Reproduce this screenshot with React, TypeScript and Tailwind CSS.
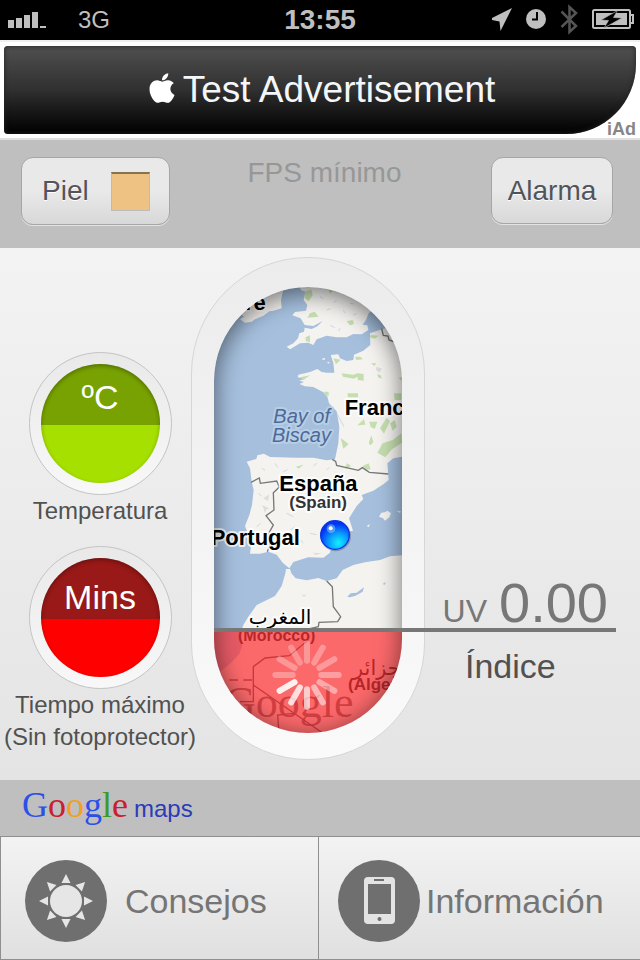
import { FaApple } from "react-icons/fa";

const SANS = "font-['Liberation_Sans','Noto_Sans',sans-serif]";

function StatusBar() {
  return (
    <header className="relative flex h-10 items-center justify-between bg-black pl-2 pr-1 text-[#bfbfbf]">
      <div className="flex items-center gap-8">
        <svg className="h-4 w-[38px]" viewBox="0 0 38 16" fill="currentColor" aria-hidden="true">
          <rect x="0" y="8" width="6" height="8" />
          <rect x="8" y="6" width="6" height="10" />
          <rect x="16" y="3" width="6" height="13" />
          <rect x="24" y="0" width="6" height="16" />
          <rect x="32" y="14" width="6" height="2" />
        </svg>
        <span className="text-2xl leading-10">3G</span>
      </div>
      <time className="absolute inset-x-0 text-center text-[28px] leading-10 font-bold">13:55</time>
      <svg className="h-10 w-36" viewBox="0 0 144 40" fill="currentColor" aria-hidden="true">
        <path d="M20 8 L8.500 31 L7.500 21.500 L-3 19.500 Z" />
        <circle cx="44" cy="19" r="10" />
        <path d="M45 12 V19.500 H40" fill="none" stroke="#000" strokeWidth="2" />
        <path d="M69.500 11.500 L84 26 L77.500 32 V7 L84 13 L69.500 27" fill="none" stroke="#555" strokeWidth="2.500" />
        <rect x="101" y="10" width="37" height="18" rx="1.500" fill="none" stroke="currentColor" strokeWidth="2" />
        <path d="M138 15 h3 v8 h-3" fill="none" stroke="currentColor" strokeWidth="2" />
        <rect x="104" y="13" width="31" height="12" />
        <path d="M125.500 10.500 L109 20 L116.500 20.500 L112 28 L130 18 L121.500 17.500 Z" fill="#000" stroke="#bfbfbf" strokeWidth=".6" />
      </svg>
    </header>
  );
}

function AdBanner() {
  return (
    <section className="relative border-t-2 border-b-2 border-t-[#f0f0f0] border-b-[#e0e0e0] bg-white px-1 py-1">
      <a
        href="#ad"
        className="flex h-[88px] items-center justify-center gap-1 rounded-sm rounded-br-[70px] bg-linear-to-b from-[#505050] via-[#303030] to-[#030303] text-[37px] text-[#f4f7fa] shadow-[inset_0_0_5px_#222]"
      >
        <FaApple className="mb-1 size-[34px] text-white" aria-hidden="true" />
        <span>Test Advertisement</span>
      </a>
      <span className="absolute right-1 bottom-0 text-lg leading-[18px] font-bold text-[#868686]">iAd</span>
    </section>
  );
}

const BUTTON =
  "flex items-center rounded-xl border border-[#a6a6a6] bg-linear-to-b from-[#e9e9e9] from-50% to-[#d8d8d8] text-[28px] text-[#51545b] shadow-[0_1px_0_#e4e4e4] [text-shadow:0_1px_0_#fff]";

function Toolbar() {
  return (
    <section className="flex h-[108px] items-start bg-[#bfbfbf] pt-[17px] pr-[27px] pl-[21px]">
      <button type="button" className={`${BUTTON} h-[68px] w-[149px] justify-between pr-[19px] pl-5`}>
        Piel
        <span className="size-[39px] border border-t-2 border-[#bbb] border-t-[#85724f] bg-[#eec283]" />
      </button>
      <p className="flex-1 pr-3 text-center text-[28px] leading-8 text-[#979797]">FPS mínimo</p>
      <button type="button" className={`${BUTTON} h-[67px] w-[122px] justify-center`}>
        Alarma
      </button>
    </section>
  );
}

function Gauge({ value, caps, dial }: { value: string; caps: string[]; dial: string }) {
  return (
    <div className="flex flex-col items-center">
      <div className="flex size-[143px] items-center justify-center rounded-full border border-[#c4c4c4] bg-linear-to-b from-[#e9e9e9] to-[#f8f8f8]">
        <div className={`size-[119px] rounded-full text-center text-[34px] text-white shadow-[inset_0_2px_4px_rgba(0,0,0,0.3)] ${dial}`}>
          {value}
        </div>
      </div>
      {caps.map((line) => (
        <p key={line} className="text-2xl leading-8 whitespace-nowrap text-[#515151]">
          {line}
        </p>
      ))}
    </div>
  );
}

const SPOKES = [0.3, 0.3, 0.32, 0.36, 0.42, 0.52, 0.66, 0.78, 0.9, 0.3, 0.3, 0.28];

function MapView() {
  return (
    <svg
      className="block h-[446px] w-full"
      viewBox="102 111 564 1338"
      preserveAspectRatio="xMidYMid slice"
      fontFamily="'Liberation Sans', 'DejaVu Sans', sans-serif"
      role="img"
      aria-label="Mapa"
    >
      <defs>
        <radialGradient id="pin" cx="0.62" cy="0.78" r="0.75">
          <stop offset="0" stopColor="#12f0ff" />
          <stop offset="0.45" stopColor="#0a9dff" />
          <stop offset="0.9" stopColor="#0434f5" />
        </radialGradient>
      </defs>
      <rect x="102" y="111" width="564" height="1338" fill="#a5bfdd" />
      <g fill="#f4f3f0">
        <path d="M310 100 L309 122 303 150 305 175 280 182 268 184 250 197 225 208 215 215 195 218 180 208 192 200 178 190 102 200 102 100Z" />
        <path d="M358 100 L362 120 376 125 371 150 382 165 378 182 345 186 337 196 362 205 374 225 400 228 428 213 412 229 395 237 374 233 372 245 358 250 354 265 340 280 320 290 330 298 345 289 360 280 385 278 400 285 410 268 440 257 470 262 500 262 520 252 545 253 565 240 562 226 548 224 558 210 566 190 580 178 600 170 600 100Z" />
        <path d="M680 215 L640 228 605 238 570 250 571 285 550 302 522 314 520 330 500 333 480 325 475 313 452 315 460 338 463 368 440 368 425 366 412 357 390 366 355 374 353 382 375 386 358 392 372 396 358 402 375 409 400 411 430 427 442 440 447 460 470 484 478 530 475 580 465 628 440 631 400 623 350 623 270 621 252 611 232 616 229 627 200 635 210 655 215 695 221 720 216 765 208 795 195 828 202 847 217 857 210 911 240 911 265 905 290 914 308 938 328 955 340 936 385 922 430 923 450 908 454 888 485 870 487 848 519 842 507 805 530 768 550 747 545 735 580 722 610 703 626 690 622 640 640 625 680 618Z" />
        <path d="M318 957 L330 957 334 970 347 985 380 991 415 984 440 993 470 985 488 960 520 945 555 937 600 930 630 919 680 914 680 1460 90 1460 90 1290 120 1265 152 1240 178 1212 186 1190 182 1150 190 1125 205 1100 230 1065 285 1038 305 1008 316 970Z" />
        <path d="M597 800 L604 788 615 787 622 782 633 790 628 802 615 812 608 804Z M560 828 l10 -6 -4 10Z M650 783 l13 1 -3 5Z M427 325 h8 v4 h-8Z M440 338 l8 -3 v6Z" />
      </g>
      <path d="M502 1040 L512 1030 530 1028 552 1012 548 1025 525 1038 508 1042Z M608 1002 l10 -6 -4 8Z" fill="#a5bfdd" />
      <g fill="#c5deaf">
        <path d="M376 124 l18 -5 4 17 -12 18 -12 -10Z M390 190 l14 -5 12 15 -34 3Z M376 262 l14 -6 v20 l-12 -2Z M443 118 l18 4 -10 8Z M500 214 l18 -4 4 12 -12 4Z" />
        <path d="M460 325 l22 4 -14 14Z M485 370 l34 4 14 -4 18 2 v20 l-18 -2 v-10 l-12 6 -32 -6Z M360 382 l30 -6 -20 14Z M432 425 h14 v12 h-10Z M572 255 l24 2 -12 9 -14 -4Z M525 320 l16 0 8 8 -20 2Z M572 340 l16 0 -4 8Z M592 372 l10 4 4 10 -12 -4Z M502 430 h32 v12 h-30Z M642 430 h22 v20 h-20Z M532 526 l20 -18 4 16Z M568 515 l24 0 -8 22 -12 -6Z M600 535 l20 -32 10 10 -18 38Z M630 520 l14 -10 6 20 -12 12Z M482 564 l24 18 -16 14Z M566 580 l8 -24 6 20 -8 10Z M592 608 l16 -28 30 -10 26 -20 2 28 -30 20 -20 24Z M500 640 l14 8 -18 8Z M548 648 l18 -8 6 18 -14 2Z M348 650 l22 -6 -14 12Z M656 384 l10 -4 v14Z" />
      </g>
      <g fill="#ddd">
        <path d="M590 350 l16 6 -8 12 -10 -8Z M250 745 l18 -12 -4 20Z M245 765 l22 10 -12 6Z M398 908 l26 2 -16 5Z M366 1034 l12 0 -6 8Z M250 770 l12 0 -8 20Z" />
      </g>
      <g fill="none" stroke="#b8cbe2" strokeWidth="2">
        <path d="M420 140 l10 6 M470 150 l-8 8 M440 180 l12 -4 M490 180 l6 10 M510 160 l12 2 M450 225 l14 8 M480 235 l-4 8 M520 195 l10 -4 M470 490 l10 18 12 22 M245 655 l10 6 M285 640 l8 12 M310 665 l12 -6 M410 640 l-10 8 M440 660 l8 -8 M520 690 l12 6 M235 730 l10 8 M320 790 l20 10 M345 830 l-14 10 M390 850 l20 4 M320 870 l-8 12 M370 880 l-10 -12 M230 830 l12 -10" />
      </g>
      <g fill="none" stroke="#777" strokeWidth="4">
        <path d="M605 236 L610 256 624 258 627 270 645 276" />
        <path d="M457 628 L467 634 470 646 535 661 547 653 568 667 625 672" />
        <path d="M213 697 L238 684 241 700 290 693 298 711 280 728 282 780 258 797 280 825 266 850 268 890 262 905" />
        <path d="M440 993 L457 1010 460 1070 482 1100 473 1115 417 1117 415 1130 390 1136" />
      </g>
      <g fill="none" stroke="#444" strokeWidth="4">
        <path d="M385 1170 L328 1217 255 1224 220 1250 220 1355 180 1355" />
        <path d="M148 1290 H218" strokeDasharray="26 16" />
        <path d="M220 1305 L428 1449 M297 1449 L293 1395 340 1390" />
      </g>
      <g stroke="#fff" strokeOpacity=".8" strokeWidth="12" strokeLinejoin="round" paintOrder="stroke" fontWeight="700" fontSize="66">
        <text x="195" y="180">re</text>
        <text x="494" y="494">France</text>
        <text x="298" y="724">España</text>
        <text x="328" y="774" fontSize="51" fill="#333">(Spain)</text>
        <text x="92" y="884">Portugal</text>
        <g fontWeight="400" fontStyle="italic" fontSize="60" fill="#4d6a99" stroke="#bcd3e8">
          <text x="280" y="518">Bay of</text>
          <text x="276" y="576">Biscay</text>
        </g>
        <text x="300" y="1122" fontSize="60" fontWeight="400" textAnchor="middle" fontFamily="'DejaVu Sans', sans-serif">المغرب</text>
      </g>
      <g fontWeight="700" fontSize="51">
        <text x="174" y="1174" fontSize="48">(Morocco)</text>
        <text x="610" y="1274" fontSize="63" fontWeight="400" textAnchor="middle" fontFamily="'DejaVu Sans', sans-serif">الجزائر</text>
        <text x="504" y="1320">(Algeria)</text>
      </g>
      <text x="132" y="1402" fontSize="132" fill="#4a4a4a" fillOpacity=".9" fontFamily="'Liberation Serif', serif">Google</text>
      <circle cx="467" cy="858" r="46" fill="#335" fillOpacity=".3" />
      <circle cx="465" cy="855" r="43" fill="url(#pin)" stroke="#0b35e0" strokeWidth="4" />
      <circle cx="453" cy="836" r="13" fill="#8ed4ff" fillOpacity=".5" />
      <circle cx="452" cy="835" r="6" fill="#fff" />
      <rect x="102" y="1140" width="564" height="320" fill="#ff3338" fillOpacity=".72" />
      <g stroke="#fff" strokeWidth="18" strokeLinecap="round">
        {SPOKES.map((opacity, i) => (
          <path key={i} d="M381 1232 V1180" strokeOpacity={opacity} transform={`rotate(${i * 30} 381 1275)`} />
        ))}
      </g>
    </svg>
  );
}

function Dashboard() {
  return (
    <main className="grid h-[532px] grid-cols-[191px_234px_1fr] items-start bg-linear-to-b from-[#f3f3f3] to-[#e4e4e4]">
      <div className="flex flex-col gap-[19px] pt-[104px] pl-[9px]">
        <Gauge value="ºC" caps={["Temperatura"]} dial="leading-[66px] bg-linear-to-b from-[#78a201] from-51% to-[#a5e000] to-51%" />
        <Gauge
          value="Mins"
          caps={["Tiempo máximo", "(Sin fotoprotector)"]}
          dial="leading-[78px] bg-linear-to-b from-[#981917] from-51% to-[#ff0000] to-51%"
        />
      </div>
      <div className="mt-[9px] rounded-full border border-[#d6d6d6] bg-linear-to-b from-[#ececec] to-[#fafafa] px-[22px] pt-[29px] pb-[26px]">
        <div className="relative overflow-hidden rounded-full">
          <MapView />
          <div className="absolute inset-0 rounded-full shadow-[inset_0_5px_24px_rgba(0,0,0,0.55)]" />
        </div>
      </div>
      <div className="relative">
        <div className="flex h-[380px] items-end justify-end pr-8 text-[#777]">
          <p className="flex items-baseline gap-3">
            <span className="text-[32px] leading-8">UV</span>
            <span className="text-[56px] leading-[50px]">0.00</span>
          </p>
        </div>
        <div className="absolute top-[380px] right-6 -left-[211px] h-1 bg-[#777]" />
        <h2 className="mt-[18px] pl-10 text-[34px] leading-10 text-[#515151]">Índice</h2>
      </div>
    </main>
  );
}

function MapsCredit() {
  return (
    <p className="flex h-14 items-baseline gap-1.5 bg-[#bfbfbf] pl-[22px]">
      <span className="font-['Liberation_Serif',serif] text-4xl leading-[50px]">
        <span className="text-[#2b50e8]">G</span>
        <span className="text-[#c8202f]">o</span>
        <span className="text-[#eda220]">o</span>
        <span className="text-[#2b50e8]">g</span>
        <span className="text-[#3f9a25]">l</span>
        <span className="text-[#c8202f]">e</span>
      </span>
      <span className="text-2xl leading-8 text-[#2a3bb8]">maps</span>
    </p>
  );
}

function SunBadge() {
  return (
    <svg className="size-[82px] shrink-0" viewBox="0 0 82 82" aria-hidden="true">
      <circle cx="41" cy="41" r="41" fill="#6f6f6f" />
      <g fill="#e6e6e6">
        <circle cx="41" cy="41" r="16" />
        {[0, 45, 90, 135, 180, 225, 270, 315].map((angle) => (
          <path key={angle} d="M41 14 L45.500 23 H36.500 Z" transform={`rotate(${angle} 41 41)`} />
        ))}
      </g>
    </svg>
  );
}

function PhoneBadge() {
  return (
    <svg className="size-[82px] shrink-0" viewBox="0 0 82 82" aria-hidden="true">
      <circle cx="41" cy="41" r="41" fill="#6f6f6f" />
      <rect x="26" y="17" width="31" height="47" rx="4" fill="#e3e3e3" />
      <rect x="30" y="24" width="23" height="30" fill="#6f6f6f" />
      <rect x="36" y="19" width="10" height="2" fill="#6f6f6f" />
      <circle cx="41.500" cy="59" r="2" fill="#6f6f6f" />
    </svg>
  );
}

const TAB = "flex items-center border-[#8f8f8f] pt-1.5 text-[34px] text-[#757575]";

function TabBar() {
  return (
    <nav className="grid min-h-[124px] flex-1 grid-cols-[318fr_321fr] border-y border-l border-[#8f8f8f] bg-linear-to-b from-[#f3f3f3] to-[#e0e0e0]">
      <button type="button" className={`${TAB} gap-[18px] border-r pl-6`}>
        <SunBadge />
        Consejos
      </button>
      <button type="button" className={`${TAB} gap-1.5 pl-[19px]`}>
        <PhoneBadge />
        Información
      </button>
    </nav>
  );
}

export default function App() {
  return (
    <div className={`flex min-h-screen flex-col ${SANS}`}>
      <StatusBar />
      <AdBanner />
      <Toolbar />
      <Dashboard />
      <MapsCredit />
      <TabBar />
    </div>
  );
}
